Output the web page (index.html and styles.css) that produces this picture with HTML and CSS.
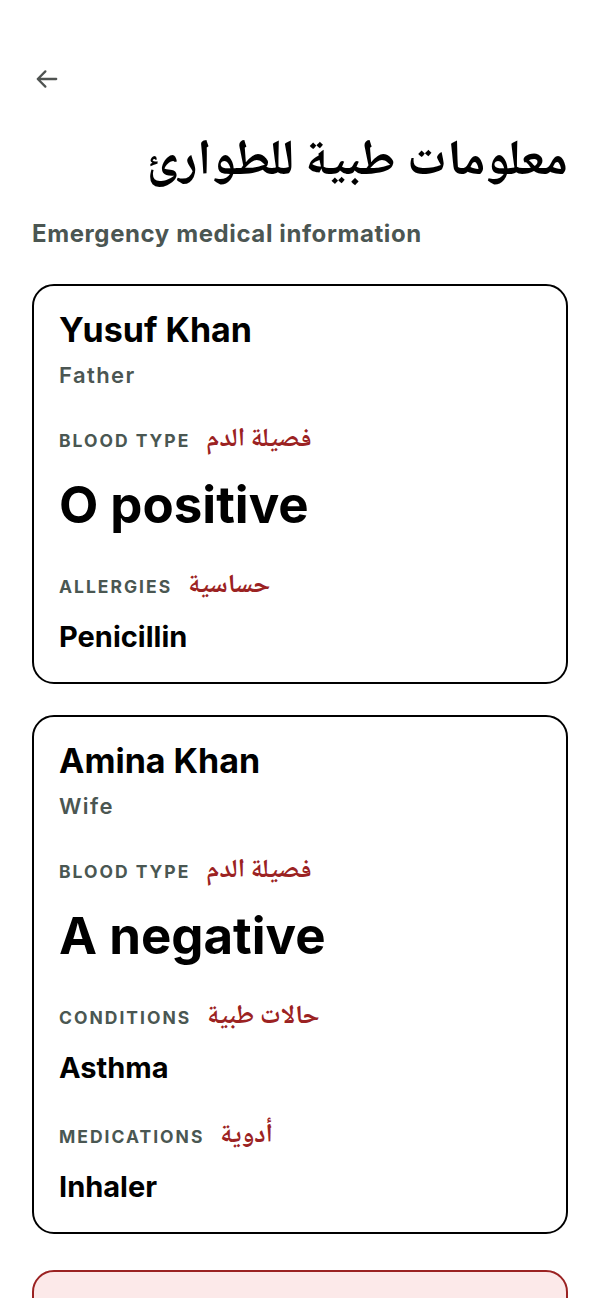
FILE: index.html
```html
<!DOCTYPE html>
<html lang="en">
<head>
<meta charset="utf-8">
<title>Emergency medical information</title>
<link rel="stylesheet" href="styles.css">
</head>
<body>
<div class="page">
  <button class="back" aria-label="Back">
    <svg width="26" height="26" viewBox="0 0 24 24" fill="none" stroke="#4f5351" stroke-width="2.1" stroke-linecap="round" stroke-linejoin="round"><path d="M20.5 12H3.5M10.5 5l-7 7 7 7"/></svg>
  </button>
  <h1 class="title" lang="ar" dir="rtl">معلومات طبية للطوارئ</h1>
  <p class="subtitle">Emergency medical information</p>

  <section class="card">
    <h2 class="name">Yusuf Khan</h2>
    <p class="relation">Father</p>
    <div class="label"><span class="en">BLOOD TYPE</span><span class="ar" lang="ar">فصيلة الدم</span></div>
    <p class="big">O positive</p>
    <div class="label"><span class="en">ALLERGIES</span><span class="ar" lang="ar">حساسية</span></div>
    <p class="value">Penicillin</p>
  </section>

  <section class="card">
    <h2 class="name">Amina Khan</h2>
    <p class="relation">Wife</p>
    <div class="label"><span class="en">BLOOD TYPE</span><span class="ar" lang="ar">فصيلة الدم</span></div>
    <p class="big">A negative</p>
    <div class="label"><span class="en">CONDITIONS</span><span class="ar" lang="ar">حالات طبية</span></div>
    <p class="value">Asthma</p>
    <div class="label"><span class="en">MEDICATIONS</span><span class="ar" lang="ar">أدوية</span></div>
    <p class="value">Inhaler</p>
  </section>

  <section class="card alert"></section>
</div>
</body>
</html>
```

FILE: styles.css
```css
* { box-sizing: border-box; }
html, body { margin: 0; padding: 0; background: #ffffff; }
body {
  font-family: "Inter", "Noto Sans", sans-serif;
  color: #000;
}
.page {
  padding: 64px 32px 0;
  display: flex;
  flex-direction: column;
  height: 1298px;
  overflow: hidden;
}
.back {
  flex: none;
  width: 30px;
  height: 30px;
  padding: 0;
  margin: 0;
  border: 0;
  background: none;
  display: flex;
  align-items: center;
  justify-content: center;
}
.title {
  margin: 34px 0 0;
  font-family: "Noto Naskh Arabic", "Amiri", "Scheherazade New", "DejaVu Sans", serif;
  font-size: 50px;
  font-weight: 700;
  line-height: 72px;
  text-align: right;
}
.subtitle {
  margin: 17px 0 0;
  font-size: 24px;
  font-weight: 700;
  letter-spacing: 0.6px;
  line-height: 34px;
  color: #4b5652;
}
.card {
  flex: none;
  margin-top: 33px;
  border: 2.6px solid #000;
  border-radius: 22px;
  padding: 22px 25px 27px;
  display: flex;
  flex-direction: column;
}
.card + .card { margin-top: 31px; }
.name {
  margin: 0;
  font-size: 34px;
  font-weight: 700;
  line-height: 44px;
}
.relation {
  margin: 8px 0 0;
  font-size: 22px;
  font-weight: 600;
  letter-spacing: 1.4px;
  line-height: 30px;
  color: #4b5652;
}
.label {
  display: flex;
  align-items: center;
  gap: 16px;
  margin-top: 32px;
  height: 36px;
}
.label .en {
  font-size: 17.5px;
  font-weight: 700;
  letter-spacing: 2px;
  color: #4a5752;
}
.label .ar {
  font-family: "Noto Naskh Arabic", "Amiri", "Scheherazade New", "DejaVu Sans", serif;
  font-size: 26px;
  font-weight: 700;
  color: #9b2222;
}
.big {
  margin: 18px 0 0;
  font-size: 51px;
  font-weight: 700;
  line-height: 58px;
}
.big + .label { margin-top: 34px; }
.value {
  margin: 15px 0 0;
  font-size: 29px;
  font-weight: 700;
  line-height: 36px;
}
.card.alert {
  margin-top: 36px;
  min-height: 120px;
  background: #fce9e9;
  border-color: #9b2222;
}
```
